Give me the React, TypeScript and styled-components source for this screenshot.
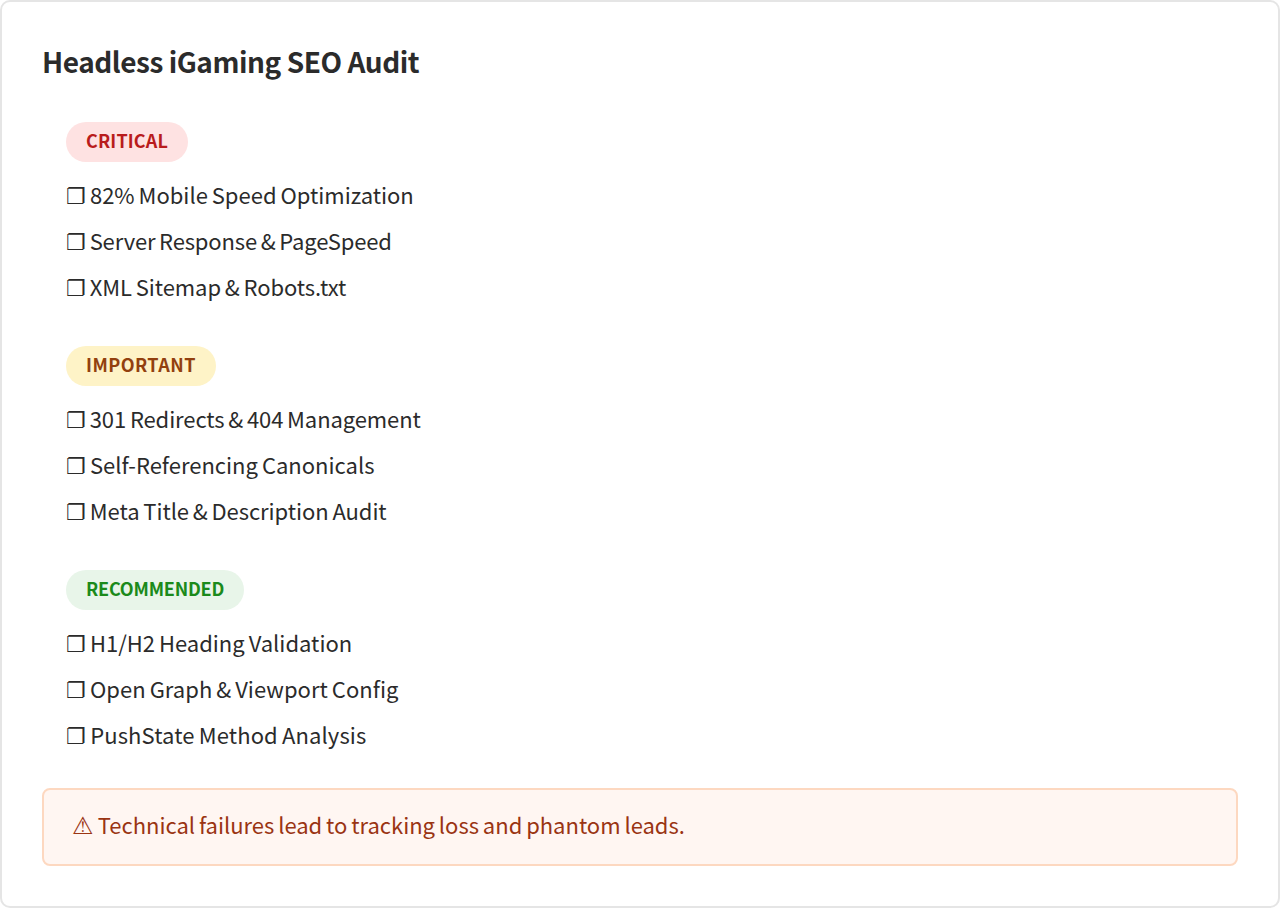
import styled, { createGlobalStyle } from "styled-components";

const GlobalStyle = createGlobalStyle`
  html, body {
    margin: 0;
    padding: 0;
    background: #fff;
  }
  body {
    font-family: "Noto Sans CJK JP", "Noto Sans", sans-serif;
  }
`;

const Card = styled.div`
  box-sizing: border-box;
  width: 1280px;
  height: 908px;
  padding: 40px;
  background: #fff;
  border: 2px solid #e5e5e5;
  border-radius: 10px;
`;

const Title = styled.h1`
  margin: 0 0 42px;
  font-size: 28px;
  line-height: 38px;
  font-weight: 700;
  letter-spacing: -0.46px;
  color: #2b2b2b;
`;

const Groups = styled.div`
  display: flex;
  flex-direction: column;
  gap: 36px;
  margin-left: 24px;
`;

const Badge = styled.span<{ $bg: string; $fg: string; $ls: number }>`
  display: inline-block;
  height: 40px;
  padding: 0 20px;
  border-radius: 20px;
  font-size: 18px;
  line-height: 37px;
  font-weight: 700;
  letter-spacing: ${(p) => p.$ls}px;
  background: ${(p) => p.$bg};
  color: ${(p) => p.$fg};
  vertical-align: top;
`;

const List = styled.ul`
  list-style: none;
  margin: 10px 0 0;
  padding: 0;
`;

const Item = styled.li<{ $ls: number }>`
  height: 46px;
  font-size: 22px;
  line-height: 44px;
  word-spacing: -1px;
  letter-spacing: ${(p) => p.$ls}px;
  color: #2b2b2b;
`;

const Note = styled.div`
  box-sizing: border-box;
  height: 78px;
  margin-top: 30px;
  padding: 0 28px;
  border: 2px solid #fdd8c0;
  border-radius: 8px;
  background: #fff6f2;
  font-size: 22px;
  line-height: 68px;
  word-spacing: -1px;
  letter-spacing: -0.02px;
  color: #9a3412;
`;

const WarnGlyph = styled.span`
  font-family: "DejaVu Sans", sans-serif;
  font-size: 24px;
  margin-right: 0.4px;
`;

const groups = [
  {
    label: "CRITICAL",
    bg: "#fee2e2",
    fg: "#b91c1c",
    ls: 0.12,
    items: [
      { text: "82% Mobile Speed Optimization", ls: 0 },
      { text: "Server Response & PageSpeed", ls: -0.15 },
      { text: "XML Sitemap & Robots.txt", ls: -0.08 },
    ],
  },
  {
    label: "IMPORTANT",
    bg: "#fef3c7",
    fg: "#92400e",
    ls: 0.45,
    items: [
      { text: "301 Redirects & 404 Management", ls: -0.1 },
      { text: "Self-Referencing Canonicals", ls: 0 },
      { text: "Meta Title & Description Audit", ls: -0.07 },
    ],
  },
  {
    label: "RECOMMENDED",
    bg: "#e8f5e9",
    fg: "#1b8a1b",
    ls: -0.2,
    items: [
      { text: "H1/H2 Heading Validation", ls: 0 },
      { text: "Open Graph & Viewport Config", ls: 0.03 },
      { text: "PushState Method Analysis", ls: 0.12 },
    ],
  },
];

const App = () => {
  return (
    <>
      <GlobalStyle />
      <Card>
        <Title>Headless iGaming SEO Audit</Title>
        <Groups>
          {groups.map((g) => (
            <section key={g.label}>
              <Badge $bg={g.bg} $fg={g.fg} $ls={g.ls}>{g.label}</Badge>
              <List>
                {g.items.map((item) => (
                  <Item key={item.text} $ls={item.ls}>❐ {item.text}</Item>
                ))}
              </List>
            </section>
          ))}
        </Groups>
        <Note><WarnGlyph>⚠</WarnGlyph> Technical failures lead to tracking loss and phantom leads.</Note>
      </Card>
    </>
  );
};

export default App;
